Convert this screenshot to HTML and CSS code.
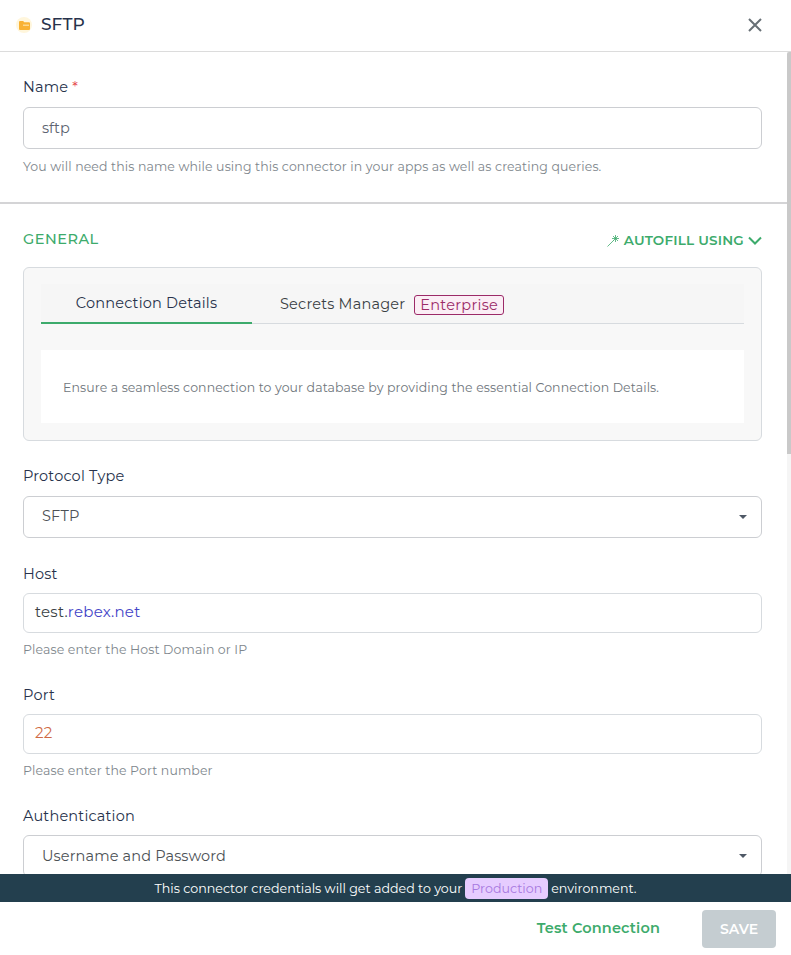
FILE: index.html
```html
<!DOCTYPE html>
<html lang="en">
<head>
<meta charset="utf-8">
<title>SFTP</title>
<link rel="stylesheet" href="styles.css">
</head>
<body>
<div class="modal">
  <header class="head">
    <div class="head-title">
      <span class="logo">
        <svg width="11" height="9" viewBox="0 0 11 9"><path d="M0 1a1 1 0 0 1 1-1h3.2l1 1.2H10a1 1 0 0 1 1 1V8a1 1 0 0 1-1 1H1a1 1 0 0 1-1-1z" fill="#f9b233"/><rect x="4" y="3.6" width="6" height="1.2" fill="#fde2a6"/></svg>
      </span>
      <h1 class="title">SFTP</h1>
    </div>
    <svg class="close" width="14" height="14" viewBox="0 0 14 14"><path d="M1 1l12 12M13 1L1 13" stroke="#687076" stroke-width="2" fill="none"/></svg>
  </header>
  <div class="body">
    <main class="scroll">
      <section class="name-block">
        <label class="label label-name">Name <span class="req">*</span></label>
        <div class="input input-name">sftp</div>
        <p class="help help-name">You will need this name while using this connector in your apps as well as creating queries.</p>
      </section>
      <section class="general">
        <div class="general-head">
          <span class="general-title">GENERAL</span>
          <span class="autofill">
            <svg class="wand" width="13" height="13" viewBox="0 0 13 13" fill="none" stroke="#3dab6c" stroke-width="0.8"><path d="M0.5 12.5L6.5 6.5"/><path d="M8.5 1v7M5 4.5h7M6 2l5 5M11 2L6 7"/></svg>
            <span>AUTOFILL USING</span>
            <svg width="14" height="9" viewBox="0 0 14 9" fill="none" stroke="#3dab6c" stroke-width="2"><path d="M1 1.5l6 6 6-6"/></svg>
          </span>
        </div>
        <div class="panel">
          <div class="tabs">
            <div class="tab tab-active">Connection Details</div>
            <div class="tab tab-other">Secrets Manager <span class="badge">Enterprise</span></div>
          </div>
          <div class="panel-note">Ensure a seamless connection to your database by providing the essential Connection Details.</div>
        </div>
        <div class="field field-protocol">
          <label class="label">Protocol Type</label>
          <div class="input select select-protocol">SFTP<span class="caret"></span></div>
        </div>
        <div class="field field-host">
          <label class="label label-tight">Host</label>
          <div class="input input-code">test.<span class="link">rebex.net</span></div>
          <p class="help">Please enter the Host Domain or IP</p>
        </div>
        <div class="field field-port">
          <label class="label label-tight">Port</label>
          <div class="input input-code num">22</div>
          <p class="help">Please enter the Port number</p>
        </div>
        <div class="field field-auth">
          <label class="label label-tight">Authentication</label>
          <div class="input select">Username and Password<span class="caret"></span></div>
        </div>
      </section>
    </main>
    <div class="scrollbar"><div class="thumb"></div></div>
  </div>
  <div class="env">This connector credentials will get added to your <span class="env-tag">Production</span> environment.</div>
  <footer class="foot">
    <button class="test">Test Connection</button>
    <button class="save">SAVE</button>
  </footer>
</div>
</body>
</html>
```
FILE: styles.css
```css
* { box-sizing: border-box; }
html, body { margin: 0; height: 100%; }
body { background: #fff; font-family: Montserrat, Inter, "Liberation Sans", sans-serif; color: #11181c; overflow: hidden; }
.modal { width: 791px; height: 955px; display: flex; flex-direction: column; }
.head { height: 52px; flex: none; display: flex; align-items: center; justify-content: space-between; padding: 0 29px 1px 16px; border-bottom: 1px solid #dcdcdc; }
.head-title { display: flex; align-items: center; gap: 9px; }
.logo { width: 16px; height: 16px; border-radius: 50%; background: #fff6dc; display: flex; align-items: center; justify-content: center; }
.title { margin: 0 0 2px; font-size: 17px; font-weight: 500; color: #27324b; line-height: 24px; }
.body { flex: 1; min-height: 0; display: flex; }
.scroll { flex: 1; min-width: 0; overflow: hidden; }
.scrollbar { width: 4px; flex: none; background: #f5f5f5; }
.thumb { height: 402px; background: #c9c9c9; border-radius: 2px 0 0 0; }
.name-block { height: 152px; padding: 25px 25px 0 23px; border-bottom: 2px solid #d4d4d6; }
.label { display: block; font-size: 14.5px; font-weight: 450; letter-spacing: 0.18px; color: #27324b; line-height: 20px; margin-bottom: 10px; }
.label-tight { margin-bottom: 9px; }
.req { color: #e5484d; }
.input { border: 1px solid #d7dbdf; border-radius: 6px; background: #fff; display: flex; align-items: center; font-size: 14.5px; color: #5c6370; }
.input-name { height: 42px; padding-left: 18px; border-color: #ccced2; }
.select { height: 42px; padding: 0 0 1px 18px; position: relative; border-color: #ccced2; color: #4c5155; letter-spacing: 0.14px; }
.select-protocol { padding-bottom: 3px; }
.input-code { height: 40px; padding-left: 11px; display: block; line-height: 35px; font-size: 15px; letter-spacing: 0.25px; color: #3a3f44; white-space: pre; }
.link { color: #4343c7; }
.num { color: #cf6a45; }
.help { margin: 8px 0 0; font-size: 12.5px; letter-spacing: 0.12px; line-height: 18px; color: #7e868c; }
.help-name { margin-top: 9px; }
.general { padding: 24px 25px 0 23px; }
.general-head { display: flex; justify-content: space-between; align-items: center; height: 22px; }
.general-title { font-size: 14.5px; font-weight: 500; letter-spacing: 0.5px; color: #3dab6c; }
.autofill { display: flex; align-items: center; gap: 4px; padding-top: 2px; font-size: 13.5px; font-weight: 600; letter-spacing: 0.2px; color: #3dab6c; }
.panel { margin-top: 17px; height: 174px; border: 1px solid #d7dbdf; border-radius: 6px; background: #f8f8f8; padding: 16px 17px; }
.tabs { display: flex; height: 40px; border-bottom: 1px solid #d7dbdf; background: #f6f6f6; }
.tab { font-size: 14.5px; font-weight: 450; letter-spacing: 0.2px; color: #27324b; }
.tab-active { width: 211px; text-align: center; padding-top: 10px; height: 40px; border-bottom: 2px solid #3dab6c; }
.tab-other { padding: 11px 0 0 28px; color: #3a3f44; display: flex; align-items: flex-start; gap: 9px; }
.badge { height: 20px; padding: 0 5px; line-height: 18px; border: 1px solid #9c2a68; border-radius: 3px; background: #fbeef5; color: #9c2a68; font-weight: 400; letter-spacing: 0.3px; }
.panel-note { margin-top: 26px; height: 73px; background: #fff; padding: 2px 22px 0; display: flex; align-items: center; font-size: 12.5px; letter-spacing: 0.11px; color: #6f767c; }
.field-protocol { margin-top: 25px; }
.field-host { margin-top: 26px; }
.field-port { margin-top: 26px; }
.field-auth { margin-top: 26px; }
.caret { position: absolute; right: 14px; top: 18px; border-left: 4px solid transparent; border-right: 4px solid transparent; border-top: 4px solid #4f5866; }
.env { height: 28px; flex: none; background: #233f4e; color: #fff; font-size: 12.65px; display: flex; align-items: center; justify-content: center; gap: 3px; }
.env-tag { background: #e6ccff; color: #a678e0; border-radius: 4px; padding: 2px 6px; line-height: 17px; }
.foot { height: 53px; flex: none; display: flex; justify-content: flex-end; align-items: center; padding: 0 15px 0 0; gap: 42px; }
button { font: inherit; border: 0; background: none; padding: 0; }
.test { font-size: 14.5px; font-weight: 600; letter-spacing: 0.15px; color: #3dab6c; padding-bottom: 2px; }
.save { width: 74px; height: 38px; background: #c5cdd1; border-radius: 4px; color: #fff; font-size: 14px; font-weight: 600; }
```
